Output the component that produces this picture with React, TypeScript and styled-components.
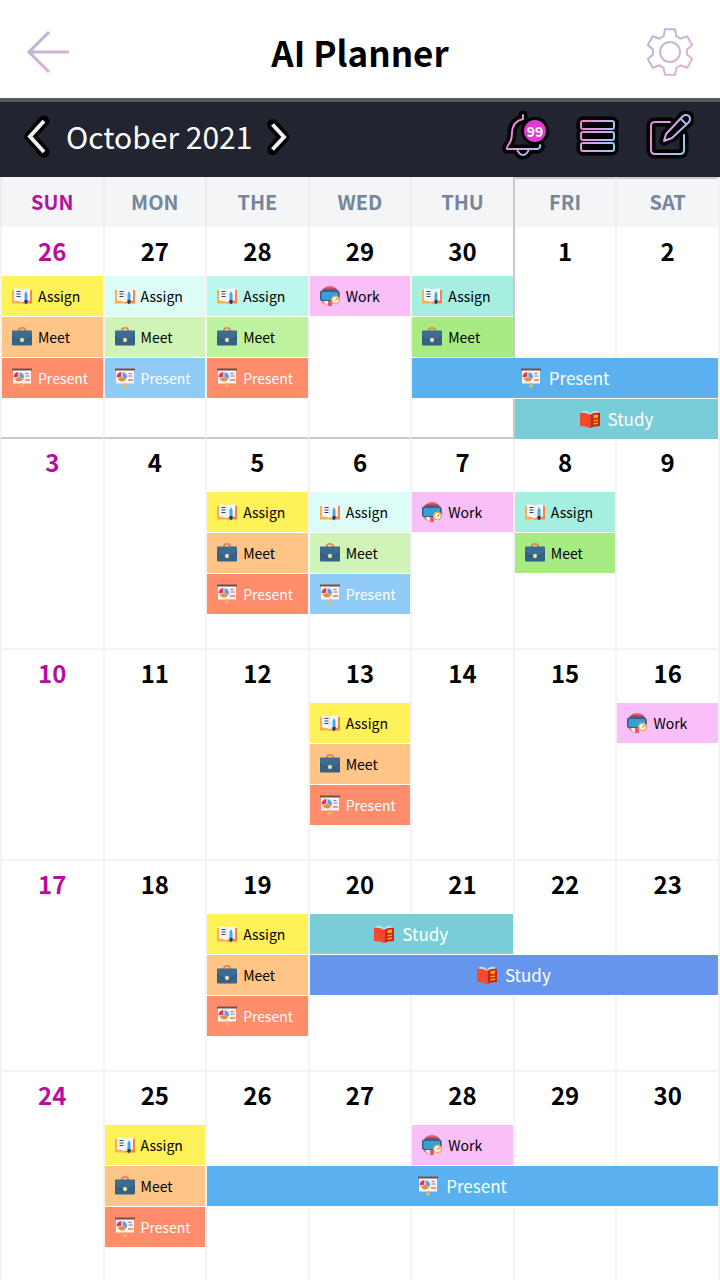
import React, { useState } from "react";
import styled, { createGlobalStyle } from "styled-components";

type Kind = "assign" | "meet" | "present" | "work" | "study";

interface CalendarEvent {
  kind: Kind;
  color: string;
  span?: number;
}

interface Week {
  days: number[];
  /* Each slot is one line of the week; the key is the column where the event begins. */
  slots: Record<number, CalendarEvent>[];
  /* Column from which the displayed month begins, when the week holds the month's start. */
  monthStart?: number;
}

const palette = {
  yellow: "#fff158",
  orange: "#fec587",
  coral: "#ff8c6b",
  ice: "#dcfcf7",
  pale: "#d0f4b8",
  sky: "#90cbf5",
  mint: "#b9f8ea",
  lime: "#bef29f",
  pink: "#f9bff9",
  jade: "#a5eee0",
  green: "#a8eb82",
  blue: "#5bb1f0",
  teal: "#78cdd9",
  royal: "#6695ec",
};

const assign = (color: string): CalendarEvent => ({ kind: "assign", color });
const meet = (color: string): CalendarEvent => ({ kind: "meet", color });
const present = (color: string, span = 1): CalendarEvent => ({ kind: "present", color, span });
const study = (color: string, span: number): CalendarEvent => ({ kind: "study", color, span });
const work: CalendarEvent = { kind: "work", color: palette.pink };

const labels: Record<Kind, string> = {
  assign: "Assign",
  meet: "Meet",
  present: "Present",
  work: "Work",
  study: "Study",
};

const weekdays = ["SUN", "MON", "THE", "WED", "THU", "FRI", "SAT"];

const weeks: Week[] = [
  {
    days: [26, 27, 28, 29, 30, 1, 2],
    monthStart: 5,
    slots: [
      { 0: assign(palette.yellow), 1: assign(palette.ice), 2: assign(palette.mint), 3: work, 4: assign(palette.jade) },
      { 0: meet(palette.orange), 1: meet(palette.pale), 2: meet(palette.lime), 4: meet(palette.green) },
      { 0: present(palette.coral), 1: present(palette.sky), 2: present(palette.coral), 4: present(palette.blue, 3) },
      { 5: study(palette.teal, 2) },
    ],
  },
  {
    days: [3, 4, 5, 6, 7, 8, 9],
    slots: [
      { 2: assign(palette.yellow), 3: assign(palette.ice), 4: work, 5: assign(palette.jade) },
      { 2: meet(palette.orange), 3: meet(palette.pale), 5: meet(palette.green) },
      { 2: present(palette.coral), 3: present(palette.sky) },
      {},
    ],
  },
  {
    days: [10, 11, 12, 13, 14, 15, 16],
    slots: [
      { 3: assign(palette.yellow), 6: work },
      { 3: meet(palette.orange) },
      { 3: present(palette.coral) },
      {},
    ],
  },
  {
    days: [17, 18, 19, 20, 21, 22, 23],
    slots: [
      { 2: assign(palette.yellow), 3: study(palette.teal, 2) },
      { 2: meet(palette.orange), 3: study(palette.royal, 4) },
      { 2: present(palette.coral) },
      {},
    ],
  },
  {
    days: [24, 25, 26, 27, 28, 29, 30],
    slots: [
      { 1: assign(palette.yellow), 4: work },
      { 1: meet(palette.orange), 2: present(palette.blue, 5) },
      { 1: present(palette.coral) },
      {},
    ],
  },
];

const GlobalStyle = createGlobalStyle`
  * { box-sizing: border-box; }
  body {
    margin: 0;
    background: #fff;
    color: #000;
    font-family: "Noto Sans CJK SC", "Noto Sans", sans-serif;
  }
  button { font: inherit; color: inherit; border: 0; padding: 0; background: none; cursor: pointer; }
  svg { display: block; flex: none; }
`;

const TopBar = styled.header`
  display: flex;
  align-items: center;
  justify-content: space-between;
  height: 98px;
  padding: 6px 24px 0;
`;

const Title = styled.h1`
  margin: 0;
  font-size: 35px;
  line-height: 48px;
  font-weight: 700;
`;

const IconButton = styled.button`
  display: flex;
  align-items: center;
  justify-content: center;
  width: 50px;
  height: 50px;
`;

const MonthBar = styled.div`
  display: flex;
  align-items: center;
  justify-content: space-between;
  height: 79px;
  padding: 0 26px 7px 20px;
  border-top: 4px solid #58595e;
  background: #22242f;
  color: #fff;
`;

const MonthPicker = styled.div`
  display: flex;
  align-items: center;
  gap: 10px;
`;

const StepButton = styled.button`
  display: flex;
  width: 36px;
  height: 44px;
`;

const MonthName = styled.h2`
  margin: 0;
  min-width: 186px;
  text-align: center;
  font-size: 30px;
  line-height: 44px;
  font-weight: 400;
`;

const Tools = styled.div`
  display: flex;
  gap: 22px;
`;

const MonthTable = styled.table`
  width: 100%;
  table-layout: fixed;
  border-collapse: separate;
  border-spacing: 0;
  border-right: 2px solid #f3f3f4;
`;

const Weekday = styled.th<{ $sunday: boolean; $inMonth: boolean; $first: boolean }>`
  height: 50px;
  padding: 0;
  background: #f4f5f7;
  border-left: 2px solid ${(p) => (p.$first ? "#c9c9cc" : "#ececee")};
  box-shadow: ${(p) => (p.$inMonth ? "inset 0 2px #c9c9cc" : "none")};
  color: ${(p) => (p.$sunday ? "#b70e9f" : "#76869d")};
  font-size: 20px;
  line-height: 50px;
  font-weight: 700;
`;

const DayNumber = styled.th<{ $sunday: boolean; $first: boolean; $tall: boolean }>`
  height: ${(p) => (p.$tall ? 53 : 49)}px;
  padding: 0;
  vertical-align: top;
  border-left: 2px solid ${(p) => (p.$first ? "#c9c9cc" : "#f3f3f4")};
  color: ${(p) => (p.$sunday ? "#b70e9f" : "#000")};
  font-size: 24px;
  line-height: ${(p) => (p.$tall ? 46 : 48)}px;
  font-weight: 700;
`;

const Slot = styled.td<{ $edge: boolean; $last: boolean; $line: string; $month: boolean }>`
  height: ${(p) => (p.$last ? (p.$month ? 40 : 35) : 41)}px;
  padding: 0;
  vertical-align: top;
  border-left: 2px solid ${(p) => (p.$edge ? "#c9c9cc" : "#f3f3f4")};
  border-bottom: ${(p) =>
    !p.$last || p.$line === "none" ? "0" : p.$line === "month" ? "2px solid #c9c9cc" : "2px solid #f3f3f4"};
`;

const EventButton = styled.button<{ $color: string; $wide: boolean; $light: boolean }>`
  display: flex;
  align-items: center;
  justify-content: ${(p) => (p.$wide ? "center" : "flex-start")};
  gap: ${(p) => (p.$wide ? 8 : 6)}px;
  width: 100%;
  height: 40px;
  padding-left: ${(p) => (p.$wide ? 0 : 10)}px;
  background: ${(p) => p.$color};
  color: ${(p) => (p.$light ? "#fff" : "#000")};
  font-size: ${(p) => (p.$wide ? 17 : 14)}px;
  line-height: 40px;
  white-space: nowrap;
`;

function AssignIcon() {
  return (
    <svg width="20" height="20" viewBox="0 0 20 20" aria-hidden="true">
      <path d="M0 4h10v13.500H0z" fill="#ffae4c" />
      <path d="M10 4h10v13.500H10z" fill="#ff7f45" />
      <path d="M2 2.500q4-.5 8 1q4-1.500 8-1v12q-4 0-8 1.500q-4-1.500-8-1.500z" fill="#f6f8fb" />
      <path d="M10 4v11" stroke="#dfe3ea" />
      <path d="M4.500 5.500h4M4.500 8h4M4.500 10.500h4" stroke="#27456b" strokeWidth="1.200" />
      <path d="M12.500 8l1.500-3 1.500 3v8h-3z" fill="#46a5e3" />
      <path d="M12.500 14h3v2.500l-1.500 2-1.500-2z" fill="#223d62" />
    </svg>
  );
}

function MeetIcon() {
  return (
    <svg width="20" height="20" viewBox="0 0 20 20" aria-hidden="true">
      <path d="M7 4V3q0-2 2-2h2q2 0 2 2v1" fill="none" stroke="#e27848" strokeWidth="1.500" />
      <rect y="3.500" width="20" height="15" rx="1" fill="#356286" />
      <path d="M0 4h20v4.500Q17 13 13 13H7Q3 13 0 8.500z" fill="#3e6c91" />
      <path d="M0 9q3 4.500 8 4.500h4q5 0 8-4.500" fill="none" stroke="#284f70" />
      <circle cx="10" cy="13" r="1.800" fill="#ffe27a" stroke="#f8f3c6" strokeWidth=".6" />
    </svg>
  );
}

function PresentIcon() {
  return (
    <svg width="20" height="20" viewBox="0 0 20 20" aria-hidden="true">
      <path d="M1 2h18v13.500H1z" fill="#f5f3f3" />
      <path d="M0 .5h20v2H0z" fill="#735047" />
      <path d="M7 9l4.200 1.500a4.500 4.500 0 0 1-8.400 0z" fill="#f08a3c" />
      <path d="M7.500 9V4.300A4.700 4.700 0 0 1 11.800 10.500z" fill="#5b9ee6" />
      <path d="M6.300 8.700V4A4.700 4.700 0 0 0 1.700 9.500z" fill="#d63c58" />
      <path d="M13.500 5.500h3M13.500 8h4" stroke="#8c72aa" strokeWidth="1.200" />
      <path d="M13 12h5" stroke="#ef7a4d" strokeWidth="1.500" />
      <path d="M10 15.500v2" stroke="#c99b54" strokeWidth="1.500" />
      <circle cx="10" cy="18" r="1.800" fill="#f4b958" />
    </svg>
  );
}

function WorkIcon() {
  return (
    <svg width="20" height="20" viewBox="0 0 20 20" aria-hidden="true">
      <circle cx="10" cy="10" r="10" fill="#ee566a" />
      <path d="M4 2.500h12l3 4H1z" fill="#85506b" />
      <path d="M3 14h12v5q-6 2-10-1z" fill="#e8edf3" />
      <path d="M8 15h4v5H8z" fill="#ee566a" />
      <rect y="4.500" width="19.500" height="10.500" rx="2" fill="#365d82" />
      <rect x="1.500" y="6" width="16.500" height="8" rx="1" fill="#35a0d6" />
      <circle cx="15.500" cy="14" r="4.500" fill="#efad5b" />
      <circle cx="15.500" cy="14" r="3" fill="#fff4df" />
      <path d="M15.500 14.500l1.800-2.200" stroke="#5b5961" />
    </svg>
  );
}

function StudyIcon() {
  return (
    <svg width="20" height="20" viewBox="0 0 20 20" aria-hidden="true">
      <path d="M2 2q6-1.500 8 3q2-4.500 8-3v10H2z" fill="#b9e3f3" />
      <path d="M0 4q6-1 10 2v13q-4-2-10-2z" fill="#f6482e" />
      <path d="M20 4q-6-1-10 2v13q4-2 10-2z" fill="#cf2412" />
      <path d="M9 5.500h2V19H9z" fill="#e54c35" />
      <path d="M13.500 6l4.500-.6v3.200l-4.500.6zM13.500 11l4.500-.6v1.500l-4.500.6zM13.500 14l4.500-.6v1.500l-4.500.6z" fill="#ffb21c" />
    </svg>
  );
}

const icons: Record<Kind, () => React.JSX.Element> = {
  assign: AssignIcon,
  meet: MeetIcon,
  present: PresentIcon,
  work: WorkIcon,
  study: StudyIcon,
};

function BackIcon() {
  return (
    <svg width="50" height="50" viewBox="0 0 50 50" fill="none" aria-hidden="true">
      <defs>
        <linearGradient id="back" gradientUnits="userSpaceOnUse" x1="8" y1="6" x2="34" y2="46">
          <stop stopColor="#b4b6e2" />
          <stop offset="1" stopColor="#e2aecd" />
        </linearGradient>
      </defs>
      <path d="M45 25H5M25 5L5 25l20 20" stroke="url(#back)" strokeWidth="3" />
    </svg>
  );
}

function GearIcon() {
  const tooth = [
    [-6.3, -16],
    [-5, -22.7],
    [5, -22.7],
    [6.3, -16],
  ];
  const points = [0, 60, 120, 180, 240, 300]
    .flatMap((deg) => {
      const a = (deg * Math.PI) / 180;
      return tooth.map(([x, y]) => [x * Math.cos(a) - y * Math.sin(a), x * Math.sin(a) + y * Math.cos(a)]);
    })
    .map(([x, y]) => `${x.toFixed(2)},${y.toFixed(2)}`)
    .join(" ");
  return (
    <svg width="50" height="50" viewBox="-24 -25 50 50" fill="none" aria-hidden="true">
      <defs>
        <linearGradient id="gear" gradientUnits="userSpaceOnUse" x1="-20" y1="-16" x2="20" y2="18">
          <stop stopColor="#adbce3" />
          <stop offset="1" stopColor="#e8b0ce" />
        </linearGradient>
      </defs>
      <g stroke="url(#gear)" strokeWidth="2">
        <polygon points={points} />
        <circle r="10" />
      </g>
    </svg>
  );
}

function Chevron({ back = false }: { back?: boolean }) {
  const d = back ? "M24 7L10 22.500 24 38" : "M10.500 10.500L22 23 10.500 35.500";
  return (
    <svg width="36" height="44" viewBox="0 0 36 44" fill="none" aria-hidden="true">
      <path d={d} stroke="#000" strokeWidth="11" strokeLinecap="round" strokeLinejoin="round" />
      <path d={d} stroke="#eeeff6" strokeWidth="4" />
    </svg>
  );
}

/* Line drawing in a pink-to-blue gradient over a thick black outline. */
function NeonIcon({ id, children }: { id: string; children: React.ReactNode }) {
  return (
    <svg width="50" height="50" viewBox="0 0 50 50" fill="none" strokeLinecap="round" strokeLinejoin="round" aria-hidden="true">
      <defs>
        <linearGradient id={id} gradientUnits="userSpaceOnUse" x1="8" y1="18" x2="43" y2="34">
          <stop stopColor="#f183cf" />
          <stop offset=".5" stopColor="#d2a8f2" />
          <stop offset="1" stopColor="#82d2f2" />
        </linearGradient>
      </defs>
      <g stroke="#000" strokeWidth="9">{children}</g>
      <g stroke={`url(#${id})`} strokeWidth="2">{children}</g>
    </svg>
  );
}

const BellButton = styled(IconButton)`
  position: relative;
`;

const Badge = styled.span`
  position: absolute;
  top: 9px;
  left: 24px;
  width: 22px;
  height: 22px;
  border-radius: 50%;
  background: #df3bd4;
  box-shadow: 0 0 0 3px #000;
  color: #fff;
  font-size: 14px;
  line-height: 22px;
  font-weight: 700;
  text-align: center;
`;

function WeekRows({ week, tall, open }: { week: Week; tall: boolean; open: boolean }) {
  const start = week.monthStart;
  return (
    <tbody>
      <tr>
        {week.days.map((day, column) => (
          <DayNumber key={day} scope="col" $sunday={column === 0} $first={column === start} $tall={tall}>
            {day}
          </DayNumber>
        ))}
      </tr>
      {week.slots.map((slot, line) => {
        const last = line === week.slots.length - 1;
        const cells: React.ReactNode[] = [];
        let column = 0;
        while (column < 7) {
          const event = slot[column];
          const span = event?.span ?? 1;
          const Icon = event ? icons[event.kind] : null;
          const rule = open || (last && event) ? "none" : start !== undefined ? "month" : "week";
          cells.push(
            <Slot key={column} colSpan={span} $edge={column === start} $last={last} $line={rule} $month={start !== undefined}>
              {event && Icon && (
                <EventButton
                  type="button"
                  $color={event.color}
                  $wide={span > 1}
                  $light={event.kind === "present" || event.kind === "study"}
                >
                  <Icon />
                  {labels[event.kind]}
                </EventButton>
              )}
            </Slot>
          );
          column += span;
        }
        return <tr key={line}>{cells}</tr>;
      })}
    </tbody>
  );
}

const monthNames = [
  "January", "February", "March", "April", "May", "June",
  "July", "August", "September", "October", "November", "December",
];

export default function App() {
  const [month, setMonth] = useState(2021 * 12 + 9);
  return (
    <>
      <GlobalStyle />
      <TopBar>
        <IconButton type="button" aria-label="Back">
          <BackIcon />
        </IconButton>
        <Title>AI Planner</Title>
        <IconButton type="button" aria-label="Settings">
          <GearIcon />
        </IconButton>
      </TopBar>
      <main>
        <MonthBar>
          <MonthPicker>
            <StepButton type="button" aria-label="Previous month" onClick={() => setMonth(month - 1)}>
              <Chevron back />
            </StepButton>
            <MonthName>
              {monthNames[month % 12]} {Math.floor(month / 12)}
            </MonthName>
            <StepButton type="button" aria-label="Next month" onClick={() => setMonth(month + 1)}>
              <Chevron />
            </StepButton>
          </MonthPicker>
          <Tools>
            <BellButton type="button" aria-label="Notifications, 99 unread">
              <NeonIcon id="bell">
                <path d="M23 4v4q-10 2-11 13q0 8-3 12q-3 4-2 5h31q3-2 2-4M17 38q2 6 6 6t6-6" />
              </NeonIcon>
              <Badge>99</Badge>
            </BellButton>
            <IconButton type="button" aria-label="List view">
              <NeonIcon id="list">
                <rect x="9" y="10" width="33" height="8" rx="2" />
                <rect x="9" y="21" width="33" height="8" rx="2" />
                <rect x="9" y="32" width="33" height="8" rx="2" />
              </NeonIcon>
            </IconButton>
            <IconButton type="button" aria-label="New event">
              <NeonIcon id="edit">
                <path d="M26 11H11q-4 0-4 4v24q0 4 4 4h25q4 0 4-4V24" />
                <path d="M22 23L39 5q3-2 6 0q2 3 0 6L28 27l-8 3zM37 8l5 5" />
              </NeonIcon>
            </IconButton>
          </Tools>
        </MonthBar>
        <MonthTable>
          <thead>
            <tr>
              {weekdays.map((name, column) => (
                <Weekday key={name} scope="col" $sunday={column === 0} $inMonth={column > 4} $first={column === 5}>
                  {name}
                </Weekday>
              ))}
            </tr>
          </thead>
          {weeks.map((week, index) => (
            <WeekRows key={index} week={week} tall={index > 0} open={index === weeks.length - 1} />
          ))}
        </MonthTable>
      </main>
    </>
  );
}
